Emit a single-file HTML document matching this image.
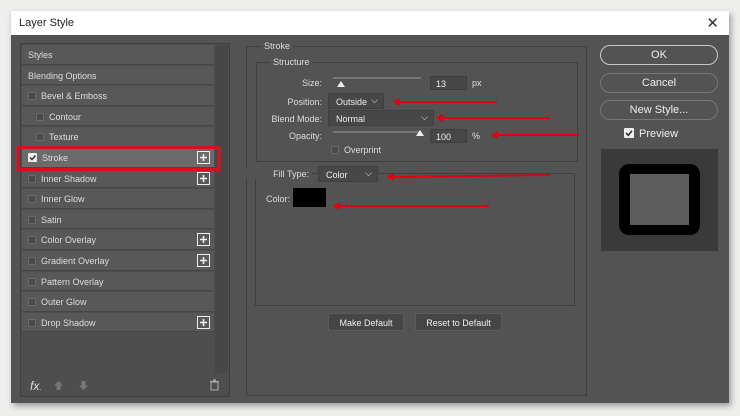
<!DOCTYPE html>
<html><head><meta charset="utf-8"><style>
*{box-sizing:border-box;margin:0;padding:0}
body{width:740px;height:416px;background:#eeeeec;position:relative;overflow:hidden;font-family:"Liberation Sans",sans-serif;font-size:9px;color:#ddd}
.a{position:absolute}
.dlg{left:11px;top:11px;width:718px;height:392px;background:#535353;box-shadow:2px 3px 6px rgba(0,0,0,.35)}
.title{left:11px;top:11px;width:718px;height:24px;background:#fff;color:#222;font-size:11px;padding:6px 0 0 8px}
.row{left:22px;width:192px;height:19.6px;background:#585858;border-bottom:1px solid #464646;padding:5px 0 0 6px}
.cb{display:inline-block;width:8px;height:8px;border:1px solid #6a6a6a;background:#4a4a4a;border-radius:1px;vertical-align:-1px;margin-right:5px}
.plus{position:absolute;right:4px;top:3px}
.box{border:1px solid #3e3e3e}
.lbl{text-align:right;width:70px}
.sel{background:#474747;border:1px solid #3f3f3f;color:#eee;padding:3px 0 0 7px;height:16px}
.sel:after{content:"⌵";position:absolute;right:5px;top:1px;font-size:9px}
.inp{background:#474747;border:1px solid #3e3e3e;color:#eee;padding:2px 0 0 5px;height:14px}
.btn{border:1px solid #9a9a9a;border-radius:10px;color:#eee;text-align:center;font-size:11px;padding-top:3px;height:20px}
.arr{height:2px;background:#e00010}
.arr:before{content:"";position:absolute;left:-6px;top:-3px;border-right:7px solid #e00010;border-top:4px solid transparent;border-bottom:4px solid transparent}
.leg{background:#535353;padding:0 3px}
.dbtn{background:#464646;border:1px solid #5c5c5c;color:#eee;text-align:center;padding-top:4px;height:18px}
</style></head><body>
<div class="a dlg"></div>
<div class="a title">Layer Style<span class="a" style="right:10px;top:3px;font-size:15px;color:#333">✕</span></div>

<!-- left panel -->
<div class="a box" style="left:20px;top:43px;width:210px;height:354px;background:#4e4e4e"></div>
<div class="a" style="left:215px;top:45px;width:13px;height:328px;background:#474747"></div>
<div class="a row" style="top:45px">Styles</div>
<div class="a row" style="top:65.6px">Blending Options</div>
<div class="a row" style="top:86.2px"><span class="cb"></span>Bevel &amp; Emboss</div>
<div class="a row" style="top:106.8px;padding-left:14px"><span class="cb"></span>Contour</div>
<div class="a row" style="top:127.4px;padding-left:14px"><span class="cb"></span>Texture</div>
<div class="a row" style="top:148px;background:#6b6b6b"><svg style="vertical-align:-1px;margin-right:5px" width="9" height="9"><rect width="9" height="9" rx="1" fill="#eee"/><path d="M2 4.5 L4 6.5 L7.5 2.5" stroke="#333" stroke-width="1.5" fill="none"/></svg>Stroke<svg class="plus" width="13" height="13"><rect x=".5" y=".5" width="12" height="12" fill="none" stroke="#eee"/><path d="M6.5 3v7M3 6.5h7" stroke="#eee" stroke-width="1.6"/></svg></div>
<div class="a row" style="top:168.6px"><span class="cb"></span>Inner Shadow<svg class="plus" width="13" height="13"><rect x=".5" y=".5" width="12" height="12" fill="none" stroke="#eee"/><path d="M6.5 3v7M3 6.5h7" stroke="#eee" stroke-width="1.6"/></svg></div>
<div class="a row" style="top:189.2px"><span class="cb"></span>Inner Glow</div>
<div class="a row" style="top:209.8px"><span class="cb"></span>Satin</div>
<div class="a row" style="top:230.4px"><span class="cb"></span>Color Overlay<svg class="plus" width="13" height="13"><rect x=".5" y=".5" width="12" height="12" fill="none" stroke="#eee"/><path d="M6.5 3v7M3 6.5h7" stroke="#eee" stroke-width="1.6"/></svg></div>
<div class="a row" style="top:251px"><span class="cb"></span>Gradient Overlay<svg class="plus" width="13" height="13"><rect x=".5" y=".5" width="12" height="12" fill="none" stroke="#eee"/><path d="M6.5 3v7M3 6.5h7" stroke="#eee" stroke-width="1.6"/></svg></div>
<div class="a row" style="top:271.6px"><span class="cb"></span>Pattern Overlay</div>
<div class="a row" style="top:292.2px"><span class="cb"></span>Outer Glow</div>
<div class="a row" style="top:312.8px"><span class="cb"></span>Drop Shadow<svg class="plus" width="13" height="13"><rect x=".5" y=".5" width="12" height="12" fill="none" stroke="#eee"/><path d="M6.5 3v7M3 6.5h7" stroke="#eee" stroke-width="1.6"/></svg></div>
<div class="a" style="left:17px;top:146px;width:204px;height:25px;border:3px solid #d8101c;border-radius:2px"></div>
<div class="a" style="left:30px;top:379px;font-size:12px;font-style:italic;color:#ddd">fx<span style="font-size:8px">.</span></div>
<svg class="a" style="left:54px;top:381px" width="9" height="9"><path d="M4.5 0 L9 4.5 H6.5 V9 H2.5 V4.5 H0Z" fill="#777"/></svg>
<svg class="a" style="left:79px;top:381px" width="9" height="9"><path d="M4.5 9 L9 4.5 H6.5 V0 H2.5 V4.5 H0Z" fill="#777"/></svg>
<svg class="a" style="left:209px;top:379px" width="11" height="12"><rect x="2" y="3" width="7" height="8" fill="none" stroke="#aaa"/><rect x="1" y="2" width="9" height="1" fill="#aaa"/><rect x="4" y="0.5" width="3" height="1.5" fill="#aaa"/></svg>

<!-- stroke group -->
<div class="a box" style="left:246px;top:46px;width:341px;height:350px"></div>
<div class="a leg" style="left:261px;top:41px">Stroke</div>
<div class="a box" style="left:256px;top:62px;width:322px;height:100px"></div>
<div class="a leg" style="left:270px;top:57px">Structure</div>
<div class="a lbl" style="left:252px;top:78px">Size:</div>
<div class="a" style="left:333px;top:77px;width:88px;height:2px;background:#777"></div>
<svg class="a" style="left:336px;top:80px" width="10" height="8"><path d="M1 7 L5 1 L9 7Z" fill="#eee"/></svg>
<div class="a inp" style="left:430px;top:76px;width:37px">13</div>
<div class="a" style="left:472px;top:78px">px</div>
<div class="a lbl" style="left:252px;top:97px">Position:</div>
<div class="a sel" style="left:328px;top:93px;width:56px">Outside</div>
<div class="a lbl" style="left:252px;top:114px">Blend Mode:</div>
<div class="a sel" style="left:328px;top:110px;width:106px">Normal</div>
<div class="a lbl" style="left:252px;top:131px">Opacity:</div>
<div class="a" style="left:333px;top:131px;width:88px;height:2px;background:#777"></div>
<svg class="a" style="left:415px;top:129px" width="10" height="8"><path d="M1 7 L5 1 L9 7Z" fill="#eee"/></svg>
<div class="a inp" style="left:430px;top:129px;width:37px">100</div>
<div class="a" style="left:472px;top:131px">%</div>
<div class="a" style="left:331px;top:145px"><span class="cb"></span>Overprint</div>

<div class="a box" style="left:255px;top:173px;width:320px;height:133px"></div>
<div class="a lbl" style="left:242px;top:169px;background:#535353;width:70px;padding-right:3px">Fill Type:</div>
<div class="a sel" style="left:318px;top:166px;width:60px">Color</div>
<div class="a" style="left:266px;top:194px">Color:</div>
<div class="a" style="left:293px;top:188px;width:33px;height:19px;background:#000"></div>

<div class="a dbtn" style="left:328px;top:313px;width:76px">Make Default</div>
<div class="a dbtn" style="left:415px;top:313px;width:87px">Reset to Default</div>

<!-- arrows -->
<div class="a arr" style="left:399px;top:101px;width:98px"></div>
<div class="a arr" style="left:442px;top:117px;width:108px"></div>
<div class="a arr" style="left:497px;top:134px;width:83px"></div>
<div class="a arr" style="left:393px;top:175px;width:157px;transform:rotate(-0.7deg)"></div>
<div class="a arr" style="left:339px;top:205px;width:150px"></div>

<!-- right -->
<div class="a btn" style="left:600px;top:45px;width:118px;border-color:#c8c8c8">OK</div>
<div class="a btn" style="left:600px;top:73px;width:118px;border-color:#777">Cancel</div>
<div class="a btn" style="left:600px;top:100px;width:118px;border-color:#777">New Style...</div>
<div class="a" style="left:624px;top:128px;font-size:11px;color:#eee"><svg style="vertical-align:-1px;margin-right:5px" width="10" height="10"><rect width="10" height="10" rx="1" fill="#eee"/><path d="M2 5 L4.3 7.3 L8 2.8" stroke="#333" stroke-width="1.6" fill="none"/></svg>Preview</div>
<div class="a" style="left:601px;top:149px;width:117px;height:102px;background:#3a3a3a"></div>
<div class="a" style="left:619px;top:164px;width:81px;height:71px;background:#000;border-radius:10px"></div>
<div class="a" style="left:630px;top:174px;width:59px;height:51px;background:#5d5d5d"></div>
</body></html>
